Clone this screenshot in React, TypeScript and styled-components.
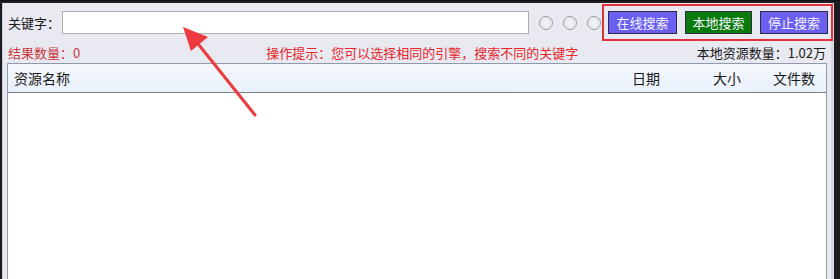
import styled, { createGlobalStyle } from "styled-components";

const GlobalStyle = createGlobalStyle`
  html, body {
    margin: 0;
    padding: 0;
    background: #1c1c1e;
  }
  body {
    font-family: "Noto Sans CJK SC", "Microsoft YaHei", sans-serif;
    font-size: 13px;
  }
`;

const Window = styled.div`
  width: 840px;
  height: 279px;
  box-sizing: border-box;
  padding: 3px 0 0 2px;
  background: linear-gradient(to bottom, #0e0e10 0px, #2a2a2e 3px, #1c1c1e 3px);
  overflow: hidden;
  position: relative;
`;

const Client = styled.div`
  width: 832px;
  height: 276px;
  box-sizing: border-box;
  background: #e9e9f1;
  border-left: 1px solid #c9cad6;
  border-right: 3px solid #d4d6e2;
  display: flex;
  flex-direction: column;
`;

const TopRow = styled.div`
  height: 39px;
  display: flex;
  align-items: center;
  padding-left: 5px;
`;

const Label = styled.span`
  color: #1a1a1a;
  font-size: 13px;
  width: 54px;
`;

const KeywordInput = styled.input`
  width: 467px;
  height: 23px;
  box-sizing: border-box;
  border: 1px solid #abadb3;
  background: #fff;
  outline: none;
  margin: 0;
`;

const Radios = styled.div`
  display: flex;
  gap: 10px;
  margin-left: 10px;
  margin-right: 7px;
`;

const Radio = styled.span`
  width: 14px;
  height: 14px;
  box-sizing: border-box;
  border-radius: 50%;
  border: 1px solid #9a9ca4;
  background: radial-gradient(circle at 50% 50%, #f4f4f6 0%, #e2e3e8 100%);
`;

const Buttons = styled.div`
  display: flex;
  gap: 8px;
`;

const Button = styled.button<{ $bg: string; $w: number }>`
  width: ${(p) => p.$w}px;
  height: 23px;
  margin: 0;
  padding: 0;
  border: 1px solid #2a2a4a;
  background: ${(p) => p.$bg};
  color: #f4f4ff;
  font-family: "Noto Sans CJK SC", sans-serif;
  font-size: 13px;
  line-height: 21px;
`;

const InfoRow = styled.div`
  height: 21px;
  display: flex;
  align-items: center;
  padding: 0 5px 0 5px;
`;

const Count = styled.span`
  color: #c8383c;
  font-size: 13px;
`;

const Hint = styled.span`
  color: #e8262c;
  font-size: 13px;
  margin-left: 186px;
`;

const Local = styled.span`
  color: #1a1a1a;
  font-size: 13px;
  margin-left: auto;
`;

const Table = styled.div`
  margin-left: 4px;
  width: 820px;
  flex: 1;
  box-sizing: border-box;
  border: 1px solid #8e99aa;
  border-bottom: none;
  background: #fff;
  display: flex;
  flex-direction: column;
`;

const Header = styled.div`
  height: 28px;
  display: grid;
  grid-template-columns: 624px 81px 60px 1fr;
  align-items: center;
  background: linear-gradient(to bottom, #f4f8fd, #e8f0fa);
  border-bottom: 1px solid #7c828c;
  font-size: 14px;
  color: #1a1a1a;
`;

const Col = styled.span<{ $first?: boolean }>`
  padding-left: ${(p) => (p.$first ? "6px" : "0")};
`;

const Highlight = styled.div`
  position: absolute;
  left: 602px;
  top: 4px;
  width: 231px;
  height: 37px;
  box-sizing: border-box;
  border: 2px solid #e8303a;
  pointer-events: none;
`;

const Arrow = styled.svg`
  position: absolute;
  left: 170px;
  top: 20px;
  pointer-events: none;
`;

export default function App() {
  return (
    <>
      <GlobalStyle />
      <Window>
        <Client>
          <TopRow>
            <Label>关键字：</Label>
            <KeywordInput />
            <Radios>
              <Radio />
              <Radio />
              <Radio />
            </Radios>
            <Buttons>
              <Button $bg="#6b5ff0" $w={69}>在线搜索</Button>
              <Button $bg="#0a7a0a" $w={67}>本地搜索</Button>
              <Button $bg="#6b5ff0" $w={68}>停止搜索</Button>
            </Buttons>
          </TopRow>
          <InfoRow>
            <Count>结果数量：0</Count>
            <Hint>操作提示：您可以选择相同的引擎，搜索不同的关键字</Hint>
            <Local>本地资源数量：1.02万</Local>
          </InfoRow>
          <Table>
            <Header>
              <Col $first>资源名称</Col>
              <Col>日期</Col>
              <Col>大小</Col>
              <Col>文件数</Col>
            </Header>
          </Table>
        </Client>
        <Highlight />
        <Arrow width="100" height="105" viewBox="0 0 100 105">
          <line x1="85" y1="95" x2="25" y2="20" stroke="#ec3a3e" strokeWidth="3" strokeLinecap="round" />
          <polygon points="13,7 38,17 21,31" fill="#ec3a3e" />
        </Arrow>
      </Window>
    </>
  );
}
